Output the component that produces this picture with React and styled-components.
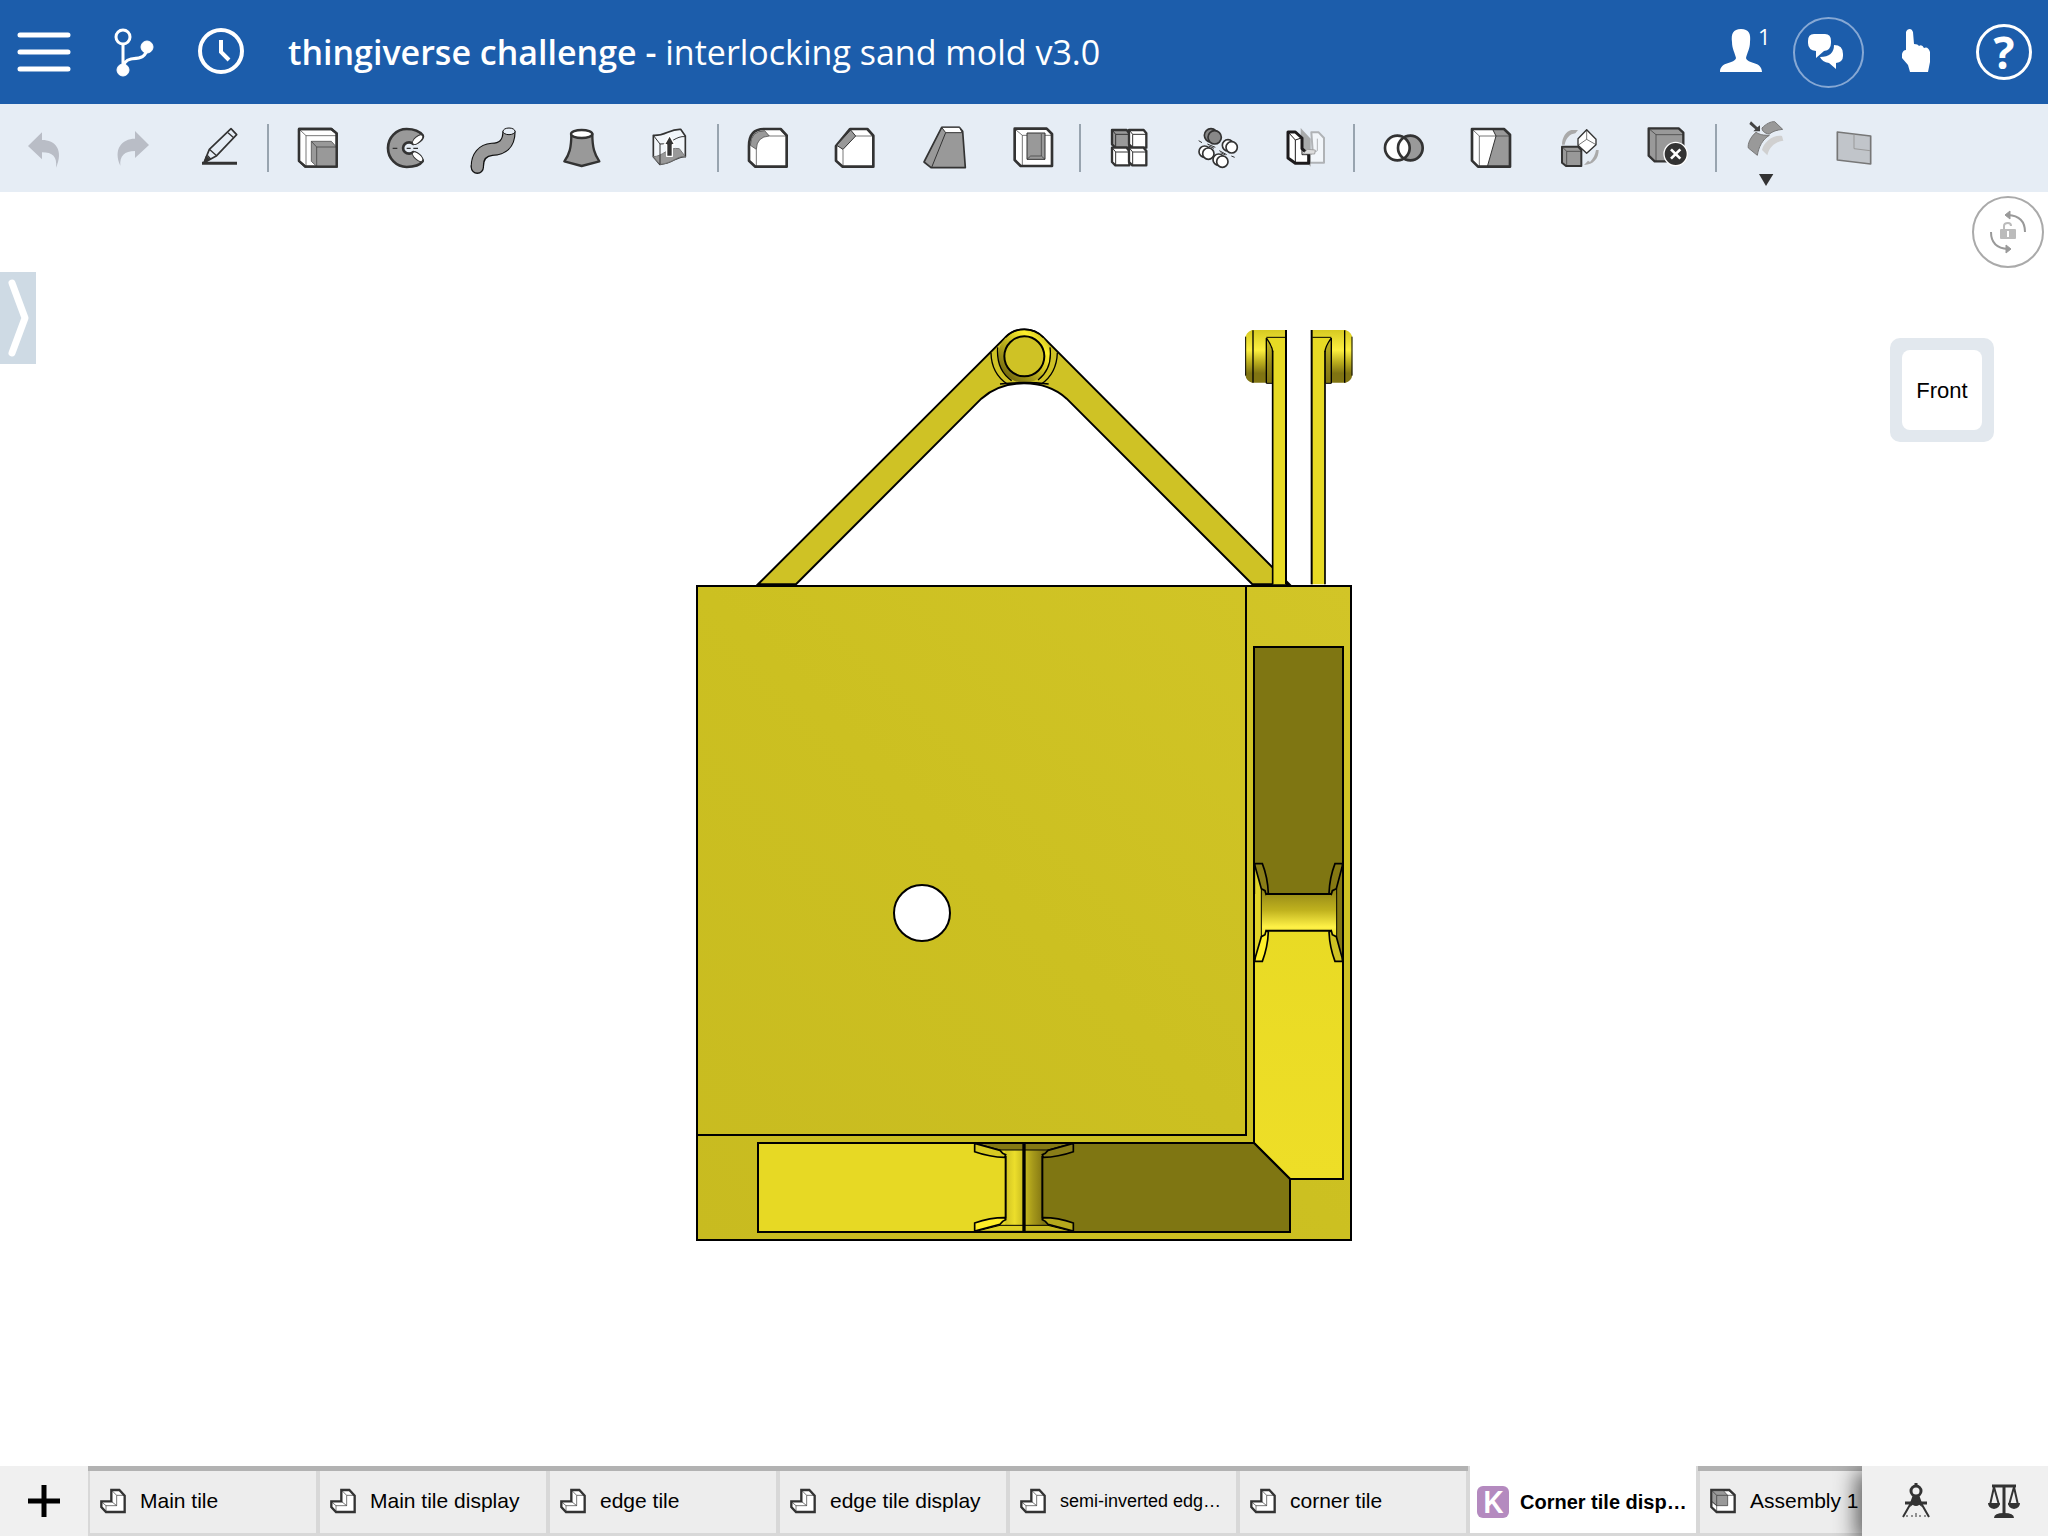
import React from "react";
import styled, { createGlobalStyle } from "styled-components";

const INK = "#333";
const GREY = "#999";

const GlobalStyle = createGlobalStyle`
  * {
    box-sizing: border-box;
  }
  body {
    margin: 0;
    background: #fff;
    font-family: "Liberation Sans", Arial, sans-serif;
  }
  button {
    margin: 0;
    padding: 0;
    border: 0;
    background: none;
    color: inherit;
    font: inherit;
    cursor: pointer;
  }
  svg {
    display: block;
    flex: none;
    overflow: visible;
  }
`;

const Page = styled.div`
  display: flex;
  flex-direction: column;
  min-height: 100vh;
`;

const TopBar = styled.header`
  display: flex;
  align-items: center;
  height: 104px;
  background: #1c5dab;
  color: #fff;
  font-family: "Open Sans", sans-serif;
`;

const BarButton = styled.button`
  position: relative;
  display: flex;
  flex: none;
  align-items: center;
  justify-content: center;
  width: 88px;
  height: 100%;
`;

const Title = styled.h1`
  flex: 1;
  margin: 0;
  padding-left: 24px;
  font-size: 34px;
  font-weight: 400;
  line-height: 48px;
  white-space: nowrap;

  strong {
    font-weight: 600;
  }
`;

const UserCount = styled.span`
  position: absolute;
  top: 24px;
  left: 62px;
  font-size: 22px;
  font-weight: 500;
  line-height: 24px;
`;

const Ring = styled.span`
  display: flex;
  align-items: center;
  justify-content: center;
  width: ${(p) => p.$size}px;
  height: ${(p) => p.$size}px;
  border: ${(p) => p.$line}px solid ${(p) => p.$color};
  border-radius: 50%;
  font-size: 44px;
  font-weight: 700;
  line-height: 48px;
`;

const Toolbar = styled.div`
  display: flex;
  align-items: center;
  height: 88px;
  background: #e6edf5;
`;

const Separator = styled.span`
  flex: none;
  width: 2px;
  height: 48px;
  margin: 0 5px 0 3px;
  background: #98a4af;
`;

const Canvas = styled.main`
  position: relative;
  display: flex;
  flex: 1;
  align-items: center;
  justify-content: center;
  padding-bottom: 88px;
`;

const PanelHandle = styled.button`
  position: absolute;
  top: 80px;
  left: 0;
  width: 36px;
  height: 92px;
  background: #cedae4;
`;

const RotateLock = styled.button`
  position: absolute;
  top: 4px;
  right: 4px;
`;

const ViewCube = styled.button`
  position: absolute;
  top: 146px;
  right: 54px;
  width: 104px;
  height: 104px;
  border: 12px solid #e2e8ee;
  border-radius: 10px;
  background: #e2e8ee;
`;

const CubeFace = styled.span`
  display: flex;
  align-items: center;
  justify-content: center;
  height: 100%;
  padding-top: 2px;
  border-radius: 8px;
  background: #fff;
  color: #000;
  font-size: 22px;
`;

const BottomBar = styled.footer`
  display: flex;
  height: 70px;
  background: #f0f0f0;
`;

const Tabs = styled.div`
  display: flex;
  flex: 1;
  min-width: 0;
  overflow: hidden;
`;

const Tab = styled.button`
  display: flex;
  flex: none;
  align-items: center;
  gap: 10px;
  width: 230px;
  padding: ${(p) => (p.$active ? 5 : 3)}px 0 3px 8px;
  background: ${(p) => (p.$active ? "#fff" : "#ededed")};
  box-shadow:
    inset 0 ${(p) => (p.$active ? 0 : 5)}px #b2b2b2,
    inset 2px 0 #d8d8d8,
    inset -2px 0 #d8d8d8,
    inset 0 -3px #d8d8d8;
  color: #000;
  font-size: ${(p) => (p.$active ? 20 : p.$small ? 18 : 21)}px;
  font-weight: ${(p) => (p.$active ? 700 : 400)};
  line-height: 24px;
  white-space: nowrap;
`;

const TabIcon = styled.span`
  display: flex;
  justify-content: center;
  width: 34px;
`;

const KBadge = styled.span`
  width: 32px;
  height: 32px;
  border-radius: 6px;
  background: #b48abf;
  color: #fff;
  font-family: Roboto, sans-serif;
  font-size: 32px;
  font-weight: 500;
  line-height: 33px;
  text-align: center;
`;

const Tools = styled.div`
  position: relative;
  display: flex;
  padding-left: 10px;
  background: #f0f0f0;
  box-shadow: -6px 6px 20px rgba(0, 0, 0, 0.6);
  clip-path: inset(0 0 0 -30px);
`;

function HeaderIcon({ children }) {
  return (
    <svg width="56" height="56" viewBox="0 0 56 56" fill="none" stroke="#fff" aria-hidden="true">
      {children}
    </svg>
  );
}

// Feature icons are drawn on a 144 unit grid, three units to a pixel
function ToolIcon({ children }) {
  return (
    <svg
      width="48"
      height="48"
      viewBox="0 0 144 144"
      fill="none"
      stroke={INK}
      strokeWidth="3"
      strokeLinejoin="round"
      aria-hidden="true"
    >
      {children}
    </svg>
  );
}

function PatternCube({ x, y, fill }) {
  return (
    <g transform={`translate(${x} ${y})`}>
      <path d="M0 0H44L52 10V53H10L0 43Z" fill={fill} strokeWidth="7" />
      <path d="M2 2L11 13H52M11 13V53" strokeWidth="3" />
    </g>
  );
}

function Cylinder({ x, y, r, fill }) {
  return (
    <g fill={fill} strokeWidth="5">
      <circle cx={x - 5} cy={y - 3} r={r} />
      <circle cx={x + 6} cy={y + 3} r={r} />
    </g>
  );
}

const icons = {
  undo: (
    <path
      d="M24 66L66 25V48C106 48 132 78 108 131C112 98 98 85 66 85V106Z"
      fill="#b9bdc6"
      stroke="none"
    />
  ),
  redo: (
    <path
      d="M123 63L81 21V44C41 44 15 76 37 125C35 96 49 81 81 81V102Z"
      fill="#b9bdc6"
      stroke="none"
    />
  ),
  sketch: (
    <>
      <path d="M18 118H123" strokeWidth="9" />
      <path d="M105 14L122 32L62 95L24 116L40 76Z" strokeWidth="5" />
      <path d="M40 76L62 95M34 94L44 105M96 26L114 42" strokeWidth="4" />
      <path d="M24 116L31 96L42 106Z" fill={INK} />
    </>
  ),
  extrude: (
    <>
      <path d="M15 15H112L128 28V128H34L15 111Z" fill="#fff" strokeWidth="7" />
      <path d="M18 18L36 35H128M36 35V128" strokeWidth="2" />
      <path d="M52 52H112L127 69V127H68L52 112Z" fill={GREY} stroke="#666" />
      <path d="M52 52L68 69H127M68 69V127" strokeWidth="2" />
      <path d="M15 15H112L128 28V128H34L15 111Z" strokeWidth="7" />
    </>
  ),
  revolve: (
    <>
      <path
        d="M122 34C110 18 92 15 74 15A56 57 0 0 0 74 129C92 129 112 126 122 112C124 102 102 86 94 84A18 17 0 1 1 94 60C104 58 127 46 122 34Z"
        fill={GREY}
        strokeWidth="8"
      />
      <ellipse cx="107" cy="47" rx="19" ry="9" transform="rotate(-42 107 47)" fill="#fff" />
      <ellipse cx="107" cy="98" rx="19" ry="9" transform="rotate(42 107 98)" fill="#fff" />
      <path d="M32 73H46M74 73H86M94 73H108" strokeWidth="4" />
    </>
  ),
  sweep: (
    <>
      <path d="M117 22C117 62 96 75 66 76C38 78 22 98 22 128" stroke="#111" strokeWidth="40" />
      <path d="M22 126V130" stroke="#111" strokeWidth="40" strokeLinecap="round" />
      <path d="M117 22C117 62 96 75 66 76C38 78 22 98 22 124" stroke={GREY} strokeWidth="33" />
      <path d="M22 123V129" stroke={GREY} strokeWidth="33" strokeLinecap="round" />
      <ellipse cx="117" cy="22" rx="18" ry="10" fill="#e6edf5" stroke="#111" />
    </>
  ),
  loft: (
    <>
      <path
        d="M40 30C40 72 34 92 19 112L71 126L124 112C110 92 103 72 103 30Z"
        fill={GREY}
        strokeWidth="7"
      />
      <ellipse cx="71" cy="30" rx="32" ry="12" fill="#fff" strokeWidth="7" />
    </>
  ),
  thicken: (
    <>
      <path
        d="M22 34C60 36 70 14 104 16L118 36V98C95 94 80 118 42 121L22 98Z"
        fill="#f2f6fa"
        strokeWidth="5"
      />
      <path d="M22 98C50 98 66 68 100 74L118 98C95 94 80 118 42 121Z" fill={GREY} stroke="#777" />
      <path d="M22 34L42 60C75 62 90 34 118 38M42 60V121" />
      <path d="M62 97V62H55L71 34L86 62H79V97Z" fill={INK} stroke="#fff" strokeWidth="4" />
    </>
  ),
  fillet: (
    <>
      <path d="M60 15H110L128 34V128H34L15 110V66Q15 15 60 15Z" fill="#fff" strokeWidth="8" />
      <path d="M19 64Q20 20 62 20L76 36Q38 38 37 76Z" fill={GREY} strokeWidth="2" />
      <path d="M76 36H126M112 20L126 36M37 76V126" strokeWidth="2" />
    </>
  ),
  chamfer: (
    <>
      <path d="M12 66L54 15H106L124 35V128H32L12 110Z" fill="#fff" strokeWidth="8" />
      <path d="M14 64L56 18L71 36L33 76Z" fill={GREY} />
      <path d="M71 36H122M108 20L122 36M33 76V126" strokeWidth="2" />
    </>
  ),
  draft: (
    <>
      <path d="M65 10H118L128 22L136 131H33L12 114Z" fill={GREY} strokeWidth="5" />
      <path d="M65 10H118L127 26H77Z" fill="#fff" />
      <path d="M77 26L35 130" />
    </>
  ),
  shell: (
    <>
      <path d="M20 14H116L132 30V126H38L20 108Z" fill="#fff" strokeWidth="8" />
      <path d="M24 18L43 34V123M43 34H57M111 34H130" strokeWidth="2" />
      <rect x="57" y="27" width="54" height="79" fill={GREY} />
      <path d="M57 106L68 96H100V30M100 96L111 106" strokeWidth="2" />
    </>
  ),
  linear: (
    <>
      <PatternCube x={18} y={18} fill={GREY} />
      <PatternCube x={69} y={18} fill="#fff" />
      <PatternCube x={18} y={71} fill="#fff" />
      <PatternCube x={69} y={71} fill="#fff" />
    </>
  ),
  circular: (
    <>
      <Cylinder x={56} y={37} r={20} fill="#888" />
      <Cylinder x={107} y={67} r={17} fill="#fff" />
      <Cylinder x={37} y={86} r={17} fill="#fff" />
      <Cylinder x={79} y={110} r={17} fill="#fff" />
      <path d="M14 50L24 56M40 60L64 70M44 66L60 73M76 80L98 92M80 86L94 93M112 96L122 100" />
    </>
  ),
  mirror: (
    <>
      <path d="M88 25H110L126 42V116H82V80H92Z" fill="#f2f6fa" stroke="#b0b3b6" strokeWidth="6" />
      <path d="M106 44V80L86 92" stroke="#b0b3b6" />
      <path d="M56 12L86 44V128L56 96Z" fill={GREY} stroke="none" opacity="0.8" />
      <path d="M18 24H40L60 42V74L80 92V118H40L18 102Z" fill="#fff" stroke="#1c1a1c" strokeWidth="9" />
      <path d="M20 26L40 48V116M40 48L58 42M60 78V92H80" stroke="#1c1a1c" />
      <path d="M62 90L76 76L100 78L98 90Z" fill="#ddd" stroke="#888" strokeWidth="2" />
    </>
  ),
  boolean: (
    <>
      <circle cx="91" cy="72" r="38" fill={GREY} />
      <circle cx="52" cy="72" r="38" fill="#fff" />
      <circle cx="91" cy="72" r="37" strokeWidth="8" />
      <circle cx="52" cy="72" r="37" strokeWidth="8" />
    </>
  ),
  split: (
    <>
      <path d="M12 15H108L126 32V128H30L12 110Z" fill="#fff" />
      <path d="M74 16H108L126 34V128H58L84 36Z" fill={GREY} />
      <path d="M15 18L34 36H126M34 36V126" strokeWidth="2" />
      <path d="M12 15H108L126 32V128H30L12 110Z" strokeWidth="8" />
    </>
  ),
  transform: (
    <>
      <path d="M18 62C18 40 30 22 46 18H66L58 28C42 30 30 42 26 62Z" fill="#aaa" stroke="none" />
      <path d="M128 78C128 104 112 122 84 123L96 110L102 114C112 104 118 92 120 78Z" fill="#aaa" stroke="none" />
      <path d="M18 68H66L76 78V126H30L18 116Z" fill={GREY} strokeWidth="6" />
      <path d="M20 70L32 82H76M32 82V126" strokeWidth="2" />
      <path d="M92 17L120 46V62L92 88L66 64V44Z" fill="#fff" strokeWidth="4" />
      <path d="M92 17V46L66 64M92 46L120 62" strokeWidth="2" />
    </>
  ),
  remove: (
    <>
      <path d="M14 13H104L118 26V112H32L14 95Z" fill={GREY} strokeWidth="7" />
      <path d="M17 16L36 32H118M36 32V112" strokeWidth="2" />
      <circle cx="95" cy="90" r="35" fill={INK} stroke="#fff" strokeWidth="4" />
      <path d="M81 76L109 104M109 76L81 104" stroke="#fff" strokeWidth="8" />
    </>
  ),
  edit: (
    <>
      <path d="M120 36C90 32 64 58 60 78L76 94C82 68 98 54 124 50Z" fill="#d0d0d0" stroke="none" />
      <path d="M42 25C26 38 16 60 19 72L46 94C50 68 62 46 82 34C62 34 54 32 42 25Z" fill={GREY} stroke="#777" />
      <path d="M60 12C72 0 86 -8 98 -7L122 16C104 18 92 22 82 30C66 28 60 20 60 12Z" fill={GREY} stroke="#777" />
      <path d="M27 -8L46 10L54 4V22H34L40 16L22 0Z" fill="#444" stroke="none" />
      <path d="M51 150H94L72 186Z" fill={INK} stroke="none" />
    </>
  ),
  surface: (
    <>
      <path d="M22 24L122 36V120L22 108Z" fill="#c1c5ca" stroke="#777" strokeWidth="5" />
      <path d="M72 32V74L120 80" stroke="#999" />
    </>
  ),
};

const toolGroups = [
  [["undo", "Undo"], ["redo", "Redo"], ["sketch", "Sketch"]],
  [["extrude", "Extrude"], ["revolve", "Revolve"], ["sweep", "Sweep"], ["loft", "Loft"], ["thicken", "Thicken"]],
  [["fillet", "Fillet"], ["chamfer", "Chamfer"], ["draft", "Draft"], ["shell", "Shell"]],
  [["linear", "Linear pattern"], ["circular", "Circular pattern"], ["mirror", "Mirror"]],
  [["boolean", "Boolean"], ["split", "Split"], ["transform", "Transform"], ["remove", "Delete part"]],
  [["edit", "Modify fillet"], ["surface", "Plane"]],
];

const tabs = [
  { name: "Main tile", type: "part" },
  { name: "Main tile display", type: "part" },
  { name: "edge tile", type: "part" },
  { name: "edge tile display", type: "part" },
  { name: "semi-inverted edg…", type: "part", small: true },
  { name: "corner tile", type: "part" },
  { name: "Corner tile disp…", type: "render", active: true },
  { name: "Assembly 1", type: "assembly" },
];

function Header() {
  return (
    <TopBar>
      <BarButton aria-label="Menu">
        <HeaderIcon>
          <path d="M4 11H52M4 28H52M4 45H52" strokeWidth="5" strokeLinecap="round" />
        </HeaderIcon>
      </BarButton>
      <BarButton aria-label="Versions">
        <HeaderIcon>
          <circle cx="19" cy="13" r="7" strokeWidth="3" />
          <path d="M19 20V46C19 40 22 36 27 35C36 34 42 34 43 24" strokeWidth="3" />
          <circle cx="43" cy="23" r="6" fill="#fff" />
          <circle cx="19" cy="46" r="6" fill="#fff" />
        </HeaderIcon>
      </BarButton>
      <BarButton aria-label="History">
        <HeaderIcon>
          <circle cx="29" cy="27" r="21" strokeWidth="4" />
          <path d="M29 16V28L37 36" strokeWidth="4" />
        </HeaderIcon>
      </BarButton>
      <Title>
        <strong>thingiverse challenge - </strong>
        interlocking sand mold v3.0
      </Title>
      <BarButton aria-label="Collaborators">
        <HeaderIcon>
          <path
            d="M29 5C37 5 39 10 38 18C38 25 35 29 34 34C35 40 50 37 50 48H8C8 37 23 40 24 34C23 29 20 25 20 18C19 10 21 5 29 5Z"
            fill="#fff"
            stroke="none"
          />
        </HeaderIcon>
        <UserCount>1</UserCount>
      </BarButton>
      <BarButton aria-label="Comments">
        <Ring $size={71} $line={2} $color="#86a8d4">
          <HeaderIcon>
            <path
              d="M14 10H25Q31 10 31 17V19Q31 26 24 27L16 34V27Q8 26 8 19V17Q8 10 14 10Z"
              fill="#fff"
              stroke="none"
            />
            <path
              d="M34 21Q43 21 43 30V32Q43 38 36 39V45L29 39Q22 38 20 33Q34 33 34 21Z"
              fill="#fff"
              stroke="none"
            />
          </HeaderIcon>
        </Ring>
      </BarButton>
      <BarButton aria-label="Touch help">
        <HeaderIcon>
          <path
            d="M18 8Q19 5 22 5Q24 5 25 8L26 20Q30 20 31 22Q34 20 36 24Q40 22 42 28V38L40 48H22L20 41L14 34V30Q15 26 18 26Z"
            fill="#fff"
            stroke="none"
          />
        </HeaderIcon>
      </BarButton>
      <BarButton aria-label="Help">
        <Ring $size={56} $line={3} $color="#fff">?</Ring>
      </BarButton>
    </TopBar>
  );
}

function FeatureToolbar() {
  return (
    <Toolbar role="toolbar" aria-label="Features">
      {toolGroups.map((group, index) => (
        <React.Fragment key={index}>
          {index > 0 && <Separator />}
          {group.map(([id, label]) => (
            <BarButton key={id} aria-label={label}>
              <ToolIcon>{icons[id]}</ToolIcon>
            </BarButton>
          ))}
        </React.Fragment>
      ))}
    </Toolbar>
  );
}

function PinHead() {
  return (
    <>
      <path
        d="M1038 60H936Q916 68 916 86V194Q918 212 936 218H997V160H1038Z"
        fill="url(#pin)"
        stroke="none"
      />
      <path d="M979 84L998 122V220H979Z" fill="url(#pinSide)" stroke="none" />
      <path d="M979 83H1038V823H998V122Z" fill="#e7da24" stroke="none" />
      <path d="M998 122V823" strokeWidth="5" />
      <path d="M1038 60V823" strokeWidth="6" />
      <path d="M979 82H1036M917 80V197M979 220H996" strokeWidth="3" />
      <path d="M939 61V218M979 84V220M980 85Q997 110 998 125" strokeWidth="4" />
    </>
  );
}

function Model() {
  return (
    <svg
      width="670"
      height="922"
      viewBox="689 324 670 922"
      fill="none"
      stroke="#000"
      strokeWidth="2"
      role="img"
      aria-label="Corner tile"
    >
      <defs>
        <linearGradient id="body" x1="0" y1="1" x2="1" y2="0">
          <stop offset="0" stopColor="#c8bb20" />
          <stop offset="0.5" stopColor="#ccc021" />
          <stop offset="1" stopColor="#d2c527" />
        </linearGradient>
        <linearGradient id="slot" x1="0" y1="0" x2="0" y2="1">
          <stop offset="0" stopColor="#e8da24" />
          <stop offset="1" stopColor="#eede27" />
        </linearGradient>
        <linearGradient id="pin" x1="0" y1="0" x2="0" y2="1">
          <stop offset="0" stopColor="#d6c922" />
          <stop offset="0.38" stopColor="#fdf03f" />
          <stop offset="0.62" stopColor="#b8ab1d" />
          <stop offset="0.82" stopColor="#807412" />
          <stop offset="1" stopColor="#807412" />
        </linearGradient>
        <linearGradient id="pinSide" x1="0" y1="0" x2="0" y2="1">
          <stop offset="0" stopColor="#c8bc20" />
          <stop offset="0.6" stopColor="#93871a" />
          <stop offset="1" stopColor="#807412" />
        </linearGradient>
        <linearGradient id="ball" x1="0.15" y1="0.9" x2="0.85" y2="0.15">
          <stop offset="0" stopColor="#6f650e" />
          <stop offset="0.5" stopColor="#c3b71f" />
          <stop offset="0.85" stopColor="#fff02c" />
          <stop offset="1" stopColor="#d8cb24" />
        </linearGradient>
        <linearGradient id="spool" x1="0" y1="0" x2="0" y2="1">
          <stop offset="0" stopColor="#8f8317" />
          <stop offset="0.45" stopColor="#c0b21e" />
          <stop offset="0.8" stopColor="#fff247" />
          <stop offset="1" stopColor="#e6d926" />
        </linearGradient>
        <linearGradient id="spoolLow" x1="0" y1="0" x2="1" y2="0">
          <stop offset="0" stopColor="#d0c323" />
          <stop offset="0.25" stopColor="#ecde2b" />
          <stop offset="0.5" stopColor="#c8bb20" />
          <stop offset="0.75" stopColor="#a4971a" />
          <stop offset="1" stopColor="#857813" />
        </linearGradient>
      </defs>

      {/* hinge arm and the two pins above the tile */}
      <g transform="translate(940 310) scale(0.33333)" strokeWidth="6">
        <path
          d="M-546 823L196 82A80 80 0 0 1 310 82L1048 823H937L380 266Q328 220 252 220Q176 220 124 266L-432 823Z"
          fill="#cfc225"
        />
        <circle cx="253" cy="139" r="79" fill="url(#ball)" stroke="none" />
        <path
          d="M153 128Q154 190 202 222M352 128Q350 190 304 222M173 112Q168 180 215 212M330 112Q338 176 294 210"
          strokeWidth="4"
        />
        <path d="M196 82A80 80 0 0 1 310 82" strokeWidth="5" />
        <path d="M180 222Q252 214 326 222" strokeWidth="5" />
        <circle cx="253" cy="139" r="60" fill="#cfc225" strokeWidth="6" />
        <PinHead />
        <g transform="translate(2153 0) scale(-1 1)">
          <PinHead />
        </g>
      </g>

      {/* tile body with hole */}
      <path
        d="M697 586H1351V1240H697ZM950 913A28 28 0 1 0 894 913A28 28 0 1 0 950 913Z"
        fill="url(#body)"
        fillRule="evenodd"
      />
      <path d="M1246 586V1135H697" />

      {/* right slot */}
      <path d="M1254 894H1343V1179H1290L1254 1143Z" fill="url(#slot)" stroke="none" />
      <path d="M1254 647H1343V894H1254Z" fill="#7f7612" stroke="none" />
      <g transform="translate(1220 840) scale(0.33333)" strokeWidth="5">
        <path d="M106 82L124 146V290L106 352Z" fill="#e0d329" stroke="none" />
        <path d="M366 82L350 146V290L366 352Z" fill="#857913" stroke="none" />
        <path d="M124 146L138 163H334L350 146V290L334 272H138L124 290Z" fill="url(#spool)" stroke="none" />
        <path d="M124 146V290M350 146V290" strokeWidth="3" />
        <path d="M138 162H334M138 272H334" strokeWidth="6" />
        <path d="M104 71H127Q143 112 145 160L138 163L135 152L124 146L106 82Z" fill="#8a7e18" />
        <path d="M368 71H345Q329 112 327 160L334 163L337 152L349 146L366 82Z" fill="#857913" />
        <path d="M104 364H127Q143 322 145 276L138 272L135 284L124 290L106 352Z" fill="#fff02a" />
        <path d="M368 364H345Q329 322 327 276L334 272L337 284L349 290L366 352Z" fill="#cfc223" />
      </g>
      <path d="M1254 647H1343V1179H1290L1254 1143Z" />

      {/* bottom slot */}
      <path d="M758 1143H1024V1232H758Z" fill="#e7d924" stroke="none" />
      <path d="M1024 1143H1254L1290 1179V1232H1024Z" fill="#7f7612" stroke="none" />
      <g transform="translate(940 1120) scale(0.33333)" strokeWidth="5">
        <path d="M196 90H308V316H196Z" fill="url(#spoolLow)" stroke="none" />
        <path d="M108 70H396L324 90H180Z" fill="#857913" strokeWidth="3" />
        <path d="M108 334H252V316H180Z" fill="#dfd226" strokeWidth="3" />
        <path d="M252 334H396L324 316H252Z" fill="#c6b920" strokeWidth="3" />
        <path d="M197 108V296M307 108V296" strokeWidth="6" />
        <path d="M104 70V95Q150 111 194 112L197 104L188 100L180 91Z" fill="#d8ca22" />
        <path d="M400 70V95Q354 111 310 112L307 104L316 100L324 91Z" fill="#8a7e18" />
        <path d="M104 333V309Q150 293 194 293L197 299L188 304L180 313Z" fill="#ffee28" />
        <path d="M400 333V309Q354 293 310 293L307 299L316 304L324 313Z" fill="#b5a81c" />
        <path d="M252 68V335" strokeWidth="10" />
      </g>
      <path d="M758 1143H1254L1290 1179V1232H758Z" />
    </svg>
  );
}

function TabGlyph({ type }) {
  if (type === "render") {
    return <KBadge aria-hidden="true">K</KBadge>;
  }
  return (
    <svg
      width="26"
      height="24"
      viewBox="0 0 78 72"
      fill="#fff"
      stroke={INK}
      strokeWidth="2"
      aria-hidden="true"
    >
      {type === "part" ? (
        <>
          <path d="M34 3H58L74 20V69H18L4 54V37H34Z" strokeWidth="7" />
          <path d="M36 5L50 19H72M50 19V50H18V68M5 39L18 50M34 37L50 50" fill="none" />
        </>
      ) : (
        <>
          <path d="M4 3H58L74 18V69H20L4 54Z" strokeWidth="7" />
          <path d="M6 5H40L53 19V50H20L6 38Z" fill={GREY} />
          <path d="M6 5L20 19H72M20 19V68M6 38L20 50M56 5L72 19" fill="none" />
        </>
      )}
    </svg>
  );
}

function DocumentTabs() {
  return (
    <BottomBar>
      <BarButton aria-label="Insert tab">
        <svg width="32" height="32" viewBox="0 0 32 32" stroke="#000" strokeWidth="5">
          <path d="M16 0V32M0 16H32" />
        </svg>
      </BarButton>
      <Tabs role="tablist">
        {tabs.map((tab) => (
          <Tab
            key={tab.name}
            role="tab"
            aria-selected={!!tab.active}
            $active={tab.active}
            $small={tab.small}
          >
            <TabIcon>
              <TabGlyph type={tab.type} />
            </TabIcon>
            {tab.name}
          </Tab>
        ))}
      </Tabs>
      <Tools>
        <BarButton aria-label="Measure">
          <svg width="28" height="36" viewBox="0 0 28 36" fill="none" stroke={INK} strokeWidth="2">
            <circle cx="14" cy="8" r="5" strokeWidth="3" />
            <path d="M14 0V4" strokeWidth="3" />
            <path d="M12 12L9 20L1 34M16 12L19 20L27 34" />
            <path d="M11 13L8 24L13 20H15L20 24L17 13Z" fill={INK} stroke="none" />
            <circle cx="14" cy="19" r="4" fill={INK} stroke="none" />
            <path d="M3 20H25" strokeWidth="3" />
            <path d="M5 32V34M10 32V34M14 30V34M18 32V34M23 32V34" strokeWidth="1" />
          </svg>
        </BarButton>
        <BarButton aria-label="Mass properties">
          <svg width="32" height="34" viewBox="0 0 32 34" fill="none" stroke={INK} strokeWidth="2">
            <path d="M4 2H28M16 1V32" strokeWidth="3" />
            <path d="M6 3L2 21M6 3L11 21M26 3L21 21M26 3L30 21" />
            <path
              d="M0 19H12Q12 24 6 25Q0 24 0 19ZM20 19H32Q32 24 26 25Q20 24 20 19ZM6 34Q6 29 16 29Q26 29 26 34Z"
              fill={INK}
              stroke="none"
            />
          </svg>
        </BarButton>
      </Tools>
    </BottomBar>
  );
}

function App() {
  return (
    <>
      <GlobalStyle />
      <Page>
        <Header />
        <FeatureToolbar />
        <Canvas>
          <Model />
          <PanelHandle aria-label="Open feature list">
            <svg width="36" height="92" viewBox="0 0 36 92" fill="none" stroke="#fff">
              <path d="M12 11L25 46L12 81" strokeWidth="7" strokeLinecap="round" strokeLinejoin="round" />
            </svg>
          </PanelHandle>
          <RotateLock aria-label="Lock rotation">
            <svg width="72" height="72" viewBox="0 0 72 72" fill="none" stroke="#999" strokeWidth="2">
              <circle cx="36" cy="36" r="35" stroke="#aaa" />
              <path d="M36 19Q53 20 53 36M36 53Q19 52 19 36" />
              <path d="M38 15L33 19L38 23ZM34 49L39 53L34 57Z" fill="#999" strokeWidth="1" />
              <rect x="28" y="33" width="16" height="10" rx="1" fill="#bbb" stroke="none" />
              <path d="M32 33V30Q32 27 36 27Q39 27 39 30" stroke="#bbb" />
              <path d="M36 35V41" stroke="#fff" />
            </svg>
          </RotateLock>
          <ViewCube>
            <CubeFace>Front</CubeFace>
          </ViewCube>
        </Canvas>
        <DocumentTabs />
      </Page>
    </>
  );
}

export default App;
